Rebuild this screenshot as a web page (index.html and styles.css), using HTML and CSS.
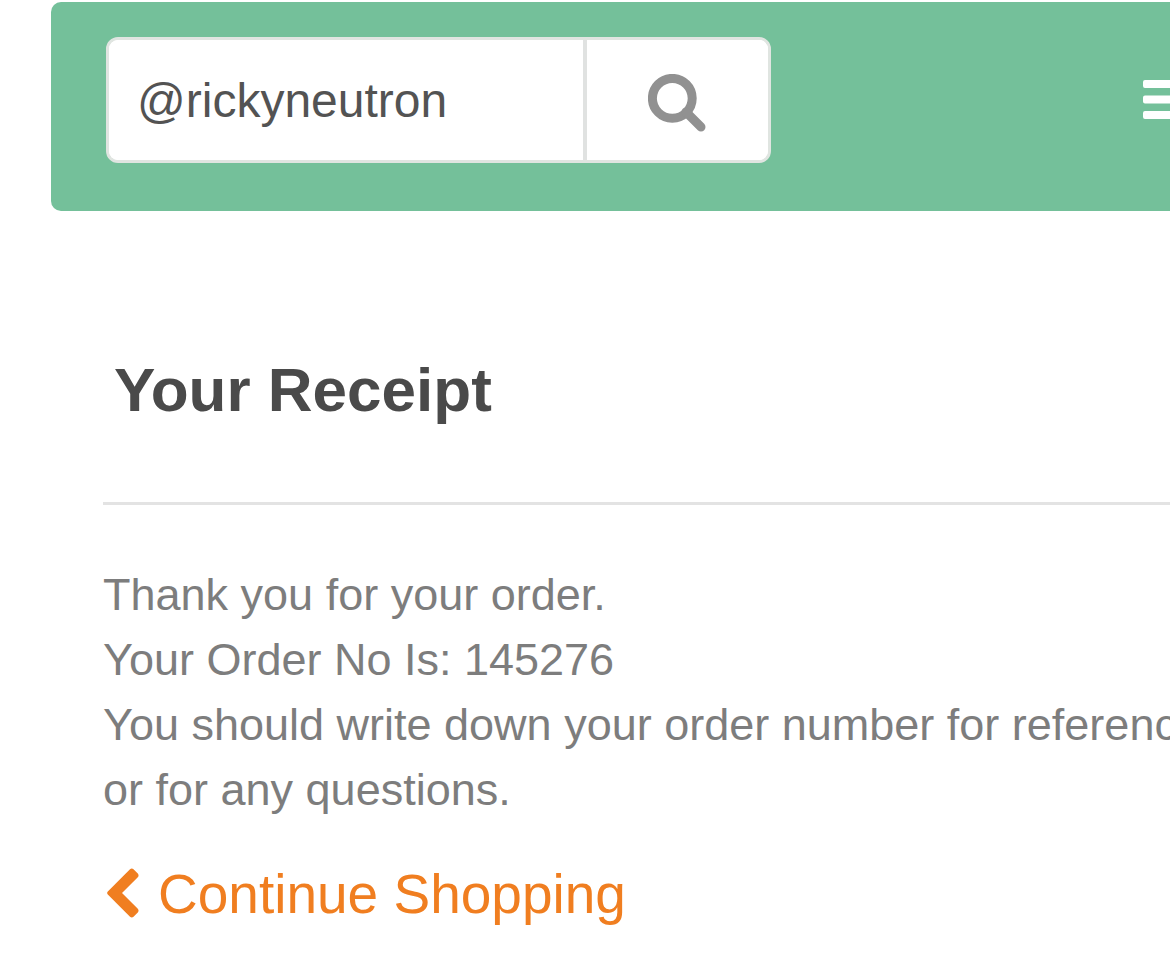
FILE: index.html
```html
<!DOCTYPE html>
<html lang="en">
<head>
<meta charset="utf-8">
<title>Your Receipt</title>
<link rel="stylesheet" href="styles.css">
</head>
<body>
<div class="page">
  <header class="topbar">
    <form class="search" role="search">
      <input class="search-input" type="text" aria-label="Search" value="@rickyneutron">
      <button class="search-button" type="button" aria-label="Submit search">
        <svg class="search-icon" viewBox="0 0 58 58" aria-hidden="true">
          <circle cx="24.300" cy="24.300" r="19.900" fill="none" stroke="currentColor" stroke-width="9"/>
          <path d="M38 38L53 53" fill="none" stroke="currentColor" stroke-width="9" stroke-linecap="round"/>
        </svg>
      </button>
    </form>
    <button class="menu-button" type="button" aria-label="Menu">
      <svg class="menu-icon" viewBox="0 0 48 40" aria-hidden="true">
        <path fill="currentColor" d="M2 0H46Q48 0 48 2V6Q48 8 46 8H2Q0 8 0 6V2Q0 0 2 0ZM2 15.500H46Q48 15.500 48 17.500V21.500Q48 23.500 46 23.500H2Q0 23.500 0 21.500V17.500Q0 15.500 2 15.500ZM2 31H46Q48 31 48 33V37Q48 39 46 39H2Q0 39 0 37V33Q0 31 2 31Z"/>
      </svg>
    </button>
  </header>
  <main class="receipt">
    <h1 class="title">Your Receipt</h1>
    <p class="message">Thank you for your order.<br>Your Order No Is: 145276<br>You should write down your order number for reference<br>or for any questions.</p>
    <a class="continue" href="#"><svg class="back-icon" viewBox="0 0 32 50" aria-hidden="true"><path fill="currentColor" d="M0.800 23.500L23 1.200Q24.800 0 26.500 1.200L30.800 5.500Q32.300 7.500 30.800 9.300L15 25L30.800 40.700Q32.300 42.500 30.800 44.500L26.500 48.800Q24.800 50 23 48.800L0.800 26.500Q-0.500 25 0.800 23.500Z"/></svg>Continue Shopping</a>
  </main>
</div>
</body>
</html>
```
FILE: styles.css
```css
* { box-sizing: border-box; }
body {
  margin: 0;
  overflow-x: hidden;
  background: #fff;
  color: #7d7d7d;
  font-family: "Liberation Sans", Arial, sans-serif;
}
.page { padding: 2px 0 0 51px; }
.topbar {
  display: flex;
  justify-content: space-between;
  align-items: flex-start;
  margin-right: -80px;
  padding: 35px 59px 48px 55px;
  border-radius: 10px;
  background: #74c09a;
}
.search {
  display: flex;
  width: 665px;
  height: 126px;
  border: 3px solid #e0e5e1;
  border-radius: 12px;
  background: #fff;
  overflow: hidden;
}
.search-input {
  flex: 1;
  min-width: 0;
  padding: 0 28px;
  border: 0;
  background: #fff;
  color: #535353;
  font: 48px "Liberation Sans", Arial, sans-serif;
}
.search-button {
  width: 185px;
  padding: 8px 2px 0 0;
  border: 0;
  border-left: 4px solid #e0e2e1;
  background: #fff;
  color: #919191;
}
.search-icon { width: 58px; height: 58px; }
.menu-button {
  flex: none;
  margin-top: 43px;
  padding: 0;
  border: 0;
  background: none;
  color: #fff;
}
.menu-icon { display: block; width: 48px; height: 40px; }
.receipt { padding-left: 52px; }
.title {
  margin: 0;
  padding: 143px 11px 76px;
  border-bottom: 3px solid #e3e3e3;
  color: #4a4a4a;
  font-size: 62px;
  line-height: 72px;
}
.message {
  margin: 57px 0 0;
  font-size: 45px;
  line-height: 65px;
  white-space: nowrap;
}
.continue {
  display: flex;
  align-items: center;
  gap: 19px;
  margin-top: 40px;
  padding-left: 4px;
  color: #f07e20;
  font-size: 55px;
  line-height: 64px;
  text-decoration: none;
}
.back-icon { width: 32px; height: 50px; margin-bottom: 2px; }
```
